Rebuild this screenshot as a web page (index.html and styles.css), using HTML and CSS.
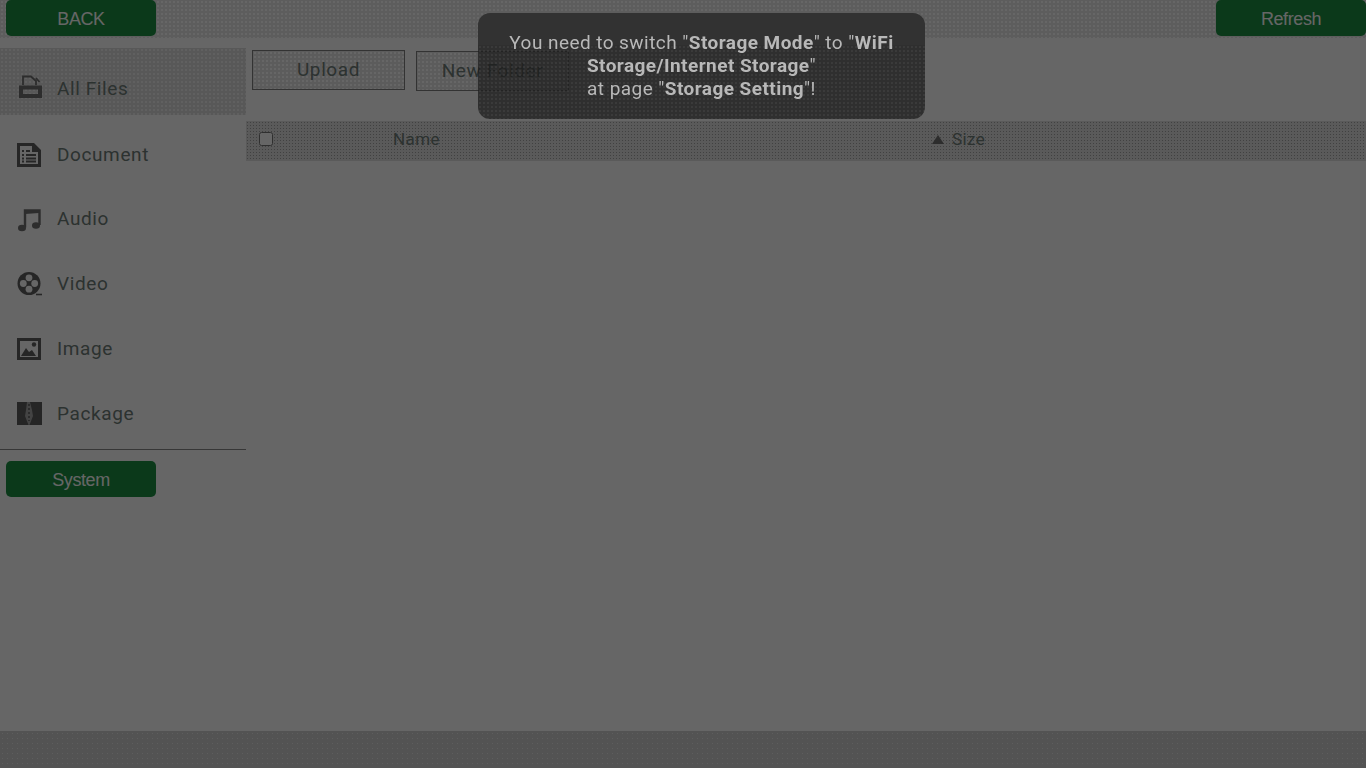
FILE: index.html
```html
<!DOCTYPE html>
<html lang="en">
<head>
  <meta charset="UTF-8" />
  <meta name="viewport" content="width=device-width, initial-scale=1" />
  <title>File Manager</title>
  <link rel="stylesheet" href="styles.css">
</head>
<body>
  <header class="topbar">
    <button class="green-btn">BACK</button>
    <button class="green-btn">Refresh</button>
  </header>

  <div class="content">
    <aside class="sidebar">
      <ul class="nav">
        <li class="nav-item active">
          <svg class="nav-icon" viewBox="0 0 26 26"><path d="M7 10V1.500h8l5 4.500V10M20 3l3.500 4" fill="none" stroke="#707070" stroke-width="1.800"/><path d="M3 10.500h23V23H3z M7 14.500v4.500h15v-4.500z" fill="#707070" fill-rule="evenodd"/></svg>
          <span>All Files</span>
        </li>
        <li class="nav-item doc">
          <svg class="nav-icon" viewBox="0 0 26 26"><path d="M1 1h17l7 7v17H1z M4 4v18h18V10h-6V4z" fill="#606060" fill-rule="evenodd"/><path d="M6 8h2v2H6zM10 8h4v2h-4zM6 12h2v2H6zM10 12h10v2H10zM6 15.500h2v2H6zM10 15.500h10v2H10zM6 18.500h2v2H6zM10 18.500h10v2H10z" fill="#606060"/></svg>
          <span>Document</span>
        </li>
        <li class="nav-item">
          <svg class="nav-icon" viewBox="0 0 26 26"><path d="M9 21.500V4.500h14.500V19" fill="none" stroke="#707070" stroke-width="2.400"/><path d="M9 5l14-1v3L9 8z" fill="#707070"/><ellipse cx="6" cy="22" rx="4" ry="3.300" fill="#707070"/><ellipse cx="20" cy="19.500" rx="4" ry="3.300" fill="#707070"/></svg>
          <span>Audio</span>
        </li>
        <li class="nav-item">
          <svg class="nav-icon" viewBox="0 0 26 26"><circle cx="13" cy="12.500" r="11.500" fill="#606060"/><circle cx="13" cy="6.800" r="3.400" fill="#fff"/><circle cx="7.300" cy="12.500" r="3.400" fill="#fff"/><circle cx="18.700" cy="12.500" r="3.400" fill="#fff"/><circle cx="13" cy="18.200" r="3.400" fill="#fff"/><path d="M20 23.500h6" stroke="#606060" stroke-width="1.600"/></svg>
          <span>Video</span>
        </li>
        <li class="nav-item">
          <svg class="nav-icon" viewBox="0 0 26 26"><path d="M1 2h24v22H1z M4 5v16h18V5z" fill="#606060" fill-rule="evenodd"/><circle cx="18" cy="8.500" r="2.200" fill="#606060"/><path d="M5 20l5-8 3 4 3-2 4 6z" fill="#606060"/></svg>
          <span>Image</span>
        </li>
        <li class="nav-item">
          <svg class="nav-icon" viewBox="0 0 26 26"><path d="M1 1h25v23H1z" fill="#5c5c5c"/><path d="M11 1h3l2 8 1 6-3.500 9h-1L9 15l1-6z" fill="#a8a8a8"/><path d="M13 3v6M13 11l0 9" stroke="#5c5c5c" stroke-width="1.500" stroke-dasharray="2 2"/></svg>
          <span>Package</span>
        </li>
      </ul>
      <div class="nav-foot">
        <button class="green-btn">System</button>
      </div>
    </aside>

    <main class="main">
      <div class="toolbar">
        <button class="tool-btn">Upload</button>
        <button class="tool-btn second">New Folder</button>
      </div>
      <div class="table-head">
        <span class="col-check"><input type="checkbox" /></span>
        <span class="col-name">Name</span>
        <span class="col-size"><i class="sort-arrow"></i>Size</span>
      </div>
    </main>
  </div>

  <footer class="footer"></footer>

  <div class="mask"></div>
  <div class="toast">
    You need to switch "<b>Storage Mode</b>" to "<b>WiFi Storage/Internet Storage</b>"<br>
    at page "<b>Storage Setting</b>"!
  </div>
</body>
</html>
```

FILE: styles.css
```css
body {
  margin: 0;
  height: 100vh;
  overflow: hidden;
  display: flex;
  flex-direction: column;
  background-color: #fff;
  font-family: Roboto, sans-serif;
  color: #6f7d78;
}

button {
  font-family: inherit;
  padding: 0;
  cursor: pointer;
}

.green-btn {
  width: 150px;
  height: 36px;
  padding-top: 2px;
  border: none;
  border-radius: 5px;
  background-color: #1c8f43;
  color: #fff;
  font-family: "Liberation Sans", Arial, sans-serif;
  font-size: 18px;
  letter-spacing: -0.4px;
}

.topbar {
  height: 38px;
  flex-shrink: 0;
  display: flex;
  justify-content: space-between;
  align-items: flex-start;
  padding-left: 6px;
  box-sizing: border-box;
  background-color: #e8e8e8;
  background-image: radial-gradient(#ffffff 0.8px, transparent 1px);
  background-size: 4px 4px;
}

.content {
  flex: 1;
  display: flex;
  min-height: 0;
}

/* Left column */
.sidebar {
  width: 246px;
  flex-shrink: 0;
  padding-top: 10px;
}

.nav {
  list-style: none;
  margin: 0;
  padding: 0;
}

.nav-item {
  height: 65px;
  box-sizing: border-box;
  display: flex;
  align-items: center;
  padding-left: 16px;
  font-size: 19px;
  letter-spacing: 0.6px;
}

.nav-item.active {
  height: 67px;
  margin-bottom: 6px;
  padding-top: 13px;
  background-color: #dcdcdc;
  background-image: radial-gradient(#f0f0f0 0.8px, transparent 1px);
  background-size: 4px 4px;
}

.nav-item.doc {
  padding-top: 2px;
}

.nav-icon {
  width: 26px;
  height: 26px;
  margin-right: 15px;
  flex-shrink: 0;
}

.nav-foot {
  margin-top: 3px;
  padding: 11px 0 0 6px;
  border-top: 1px solid #8a8a8a;
  width: 240px;
}

/* Right column */
.main {
  flex: 1;
  min-width: 0;
}

.toolbar {
  display: flex;
  align-items: flex-start;
  height: 83px;
  padding: 12px 0 0 6px;
  box-sizing: border-box;
}

.tool-btn {
  width: 153px;
  height: 40px;
  padding-bottom: 2px;
  border: 1px solid #7f7f7f;
  background-color: #e6e6e6;
  background-image: radial-gradient(#ffffff 0.8px, transparent 1px);
  background-size: 4px 4px;
  color: #6f7d78;
  font-family: Roboto, sans-serif;
  font-size: 19px;
  letter-spacing: 0.6px;
}

.tool-btn.second {
  margin: 1px 0 0 11px;
}

.table-head {
  height: 40px;
  box-sizing: border-box;
  padding-bottom: 4px;
  display: flex;
  align-items: center;
  background-color: #e0e0e0;
  background-image: radial-gradient(#a4a4a4 0.8px, transparent 1px);
  background-size: 3px 3px;
  font-size: 17px;
  letter-spacing: 0.4px;
}

.col-check {
  width: 147px;
  padding-left: 13px;
  box-sizing: border-box;
  display: flex;
}

.col-check input {
  width: 14px;
  height: 14px;
  margin: 0;
}

.col-name {
  width: 539px;
}

.col-size {
  display: flex;
  align-items: center;
}

.sort-arrow {
  width: 0;
  height: 0;
  border-left: 6px solid transparent;
  border-right: 6px solid transparent;
  border-bottom: 9px solid #707070;
  margin-right: 8px;
}

.footer {
  height: 37px;
  flex-shrink: 0;
  background-color: #cfcfcf;
  background-image: radial-gradient(#ececec 0.8px, transparent 1px);
  background-size: 5px 5px;
}

/* Dim layer and message on top of the page */
.mask {
  position: fixed;
  inset: 0;
  background-color: rgba(0, 0, 0, 0.6);
}

.toast {
  position: fixed;
  top: 13px;
  left: 478px;
  width: 447px;
  height: 106px;
  box-sizing: border-box;
  padding: 18px 30px 0;
  border-radius: 12px;
  background-color: rgba(30, 30, 30, 0.76);
  background-image:
    linear-gradient(#323232 32px, transparent 32px),
    radial-gradient(rgba(70, 70, 70, 0.5) 0.8px, transparent 1px);
  background-size: 100% 100%, 4px 4px;
  color: #b8b8b8;
  font-size: 19px;
  line-height: 23px;
  letter-spacing: 0.44px;
  text-align: center;
}

.toast b {
  font-weight: 700;
}
```
